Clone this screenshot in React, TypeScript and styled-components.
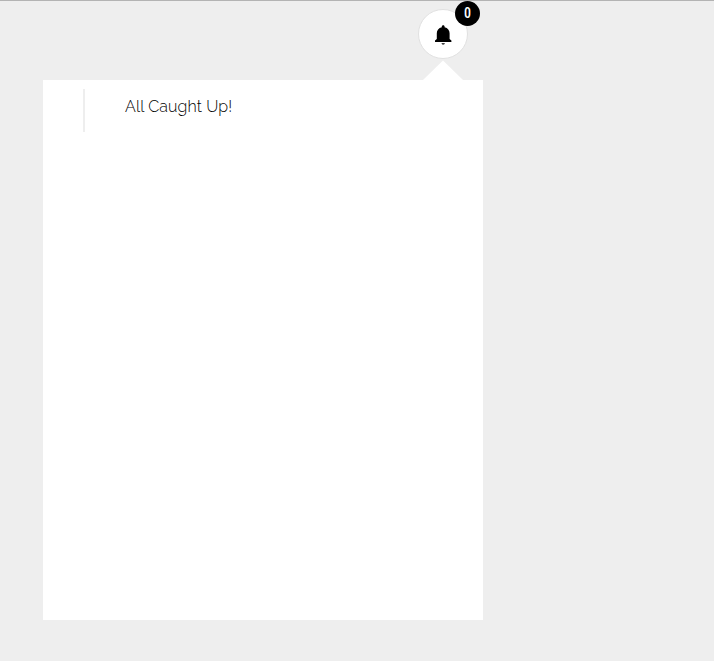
import React from 'react';
import styled, { createGlobalStyle } from 'styled-components';

const GlobalStyle = createGlobalStyle`
  *, *::before, *::after { box-sizing: border-box; }
  body {
    margin: 0;
    background: #eee;
    font-family: Raleway, Lato, 'Open Sans', sans-serif;
  }
`;

const Page = styled.main`
  height: 661px;
  overflow: hidden;
  border-top: 1px solid #b3b3b3;
  padding: 8px 0 0 43px;
`;

const Notifications = styled.section`
  width: 440px;
  display: flex;
  flex-direction: column;
  align-items: flex-end;
`;

const BellButton = styled.button`
  position: relative;
  display: flex;
  align-items: center;
  justify-content: center;
  width: 50px;
  height: 50px;
  margin-right: 15px;
  padding: 1px 0 0;
  border: 1px solid #e1e1e1;
  border-radius: 50%;
  background: #fff;
  color: #000;
`;

const BellIcon = styled.svg`
  display: block;
  width: 24px;
  height: 24px;
  fill: currentColor;
`;

const Badge = styled.span`
  position: absolute;
  top: -9px;
  right: -13px;
  width: 25px;
  height: 25px;
  border-radius: 50%;
  background: #000;
  color: #fff;
  font: 500 14px/25px Roboto, sans-serif;
  font-stretch: 85%;
  text-align: center;
`;

const Pointer = styled.div`
  width: 40px;
  height: 20px;
  margin: 1px 20px 0 0;
  background: #fff;
  clip-path: polygon(50% 3%, 100% 100%, 0 100%);
`;

const Panel = styled.div`
  width: 100%;
  height: 540px;
  padding: 9px 40px;
  background: #fff;
`;

const Message = styled.p`
  height: 43px;
  margin: 0;
  padding: 5px 0 0 40px;
  border-left: 2px solid #eee;
  color: #000;
  font-size: 16px;
  font-weight: 340;
  line-height: 26px;
  letter-spacing: 0.12px;
`;

export default function App() {
  return (
    <>
      <GlobalStyle />
      <Page>
        <Notifications>
          <BellButton aria-label="Notifications">
            <BellIcon viewBox="0 0 24 24" aria-hidden="true">
              <path d="M12.2 2.3c-.8 0-1.4.6-1.4 1.4v.5C7.6 4.800 5.800 7.300 5.800 10.300V16L4 17.500V19h16.400v-1.500L18.600 16v-5.700c0-3-1.800-5.500-5-6.100v-.5c0-.8-.6-1.400-1.400-1.400zM10.500 20.200h3.400c-.2.800-.8 1.300-1.700 1.300s-1.500-.5-1.700-1.300z" />
            </BellIcon>
            <Badge>0</Badge>
          </BellButton>
          <Pointer />
          <Panel>
            <Message>All Caught Up!</Message>
          </Panel>
        </Notifications>
      </Page>
    </>
  );
}
